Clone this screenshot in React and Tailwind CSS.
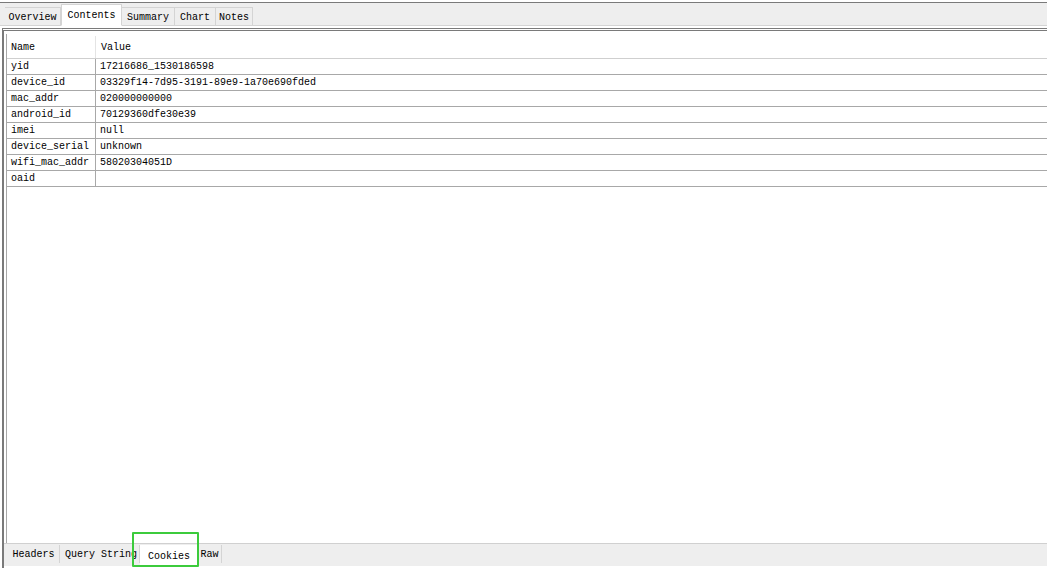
import React from "react";

const rows = [
  ["yid", "17216686_1530186598"],
  ["device_id", "03329f14-7d95-3191-89e9-1a70e690fded"],
  ["mac_addr", "020000000000"],
  ["android_id", "70129360dfe30e39"],
  ["imei", "null"],
  ["device_serial", "unknown"],
  ["wifi_mac_addr", "58020304051D"],
  ["oaid", ""],
];

const topTabs = [
  { label: "Overview", w: "w-[56px]" },
  { label: "Contents", w: "w-[61px]", active: true },
  { label: "Summary", w: "w-[53px]" },
  { label: "Chart", w: "w-[41px]" },
  { label: "Notes", w: "w-[37px]" },
];

export default function App() {
  return (
    <div
      className="w-[1047px] h-[568px] bg-white flex flex-col overflow-hidden text-[10px] text-black"
      style={{ fontFamily: '"Liberation Mono", "DejaVu Sans Mono", monospace' }}
    >
      {/* top tab strip */}
      <div className="h-[2px] bg-white" />
      <div className="h-[24px] border-t border-[#7a7a7a] border-b border-b-[#d4d4d4] bg-[#eeeeee] flex items-end pl-[5px]">
        {topTabs.map((t) =>
          t.active ? (
            <div
              key={t.label}
              className={`${t.w} h-[22px] -mb-px bg-white border border-[#d4d4d4] border-b-white flex items-start justify-center pt-[3px]`}
            >
              {t.label}
            </div>
          ) : (
            <div
              key={t.label}
              className={`${t.w} h-[18px] border-r border-t border-[#d4d4d4] flex items-center justify-center pt-[1px]`}
            >
              {t.label}
            </div>
          )
        )}
      </div>

      {/* content area */}
      <div className="flex-1 flex flex-col mt-[2px] ml-[2px] border-l-2 border-double border-l-[#7a7a7a] border-t-[3px] border-t-[#7a7a7a] border-t-double">
        <div className="flex-1 flex flex-col pt-[3px] pl-[2px]">
          <div className="border-l border-[#a8a8a8]">
            <div className="flex h-[25px] items-center border-b border-[#cfcfcf] pt-[2px]">
              <div className="w-[89px] h-full flex items-center pl-[4px] border-r border-[#e4e4e4]">Name</div>
              <div className="pl-[5px]">Value</div>
            </div>
            {rows.map(([k, v]) => (
              <div key={k} className="flex h-[16px] items-center border-b border-[#a8a8a8]">
                <div className="w-[89px] h-full flex items-center pl-[4px] border-r border-[#a8a8a8]">{k}</div>
                <div className="pl-[4px]">{v}</div>
              </div>
            ))}
          </div>
          <div className="flex-1 border-l border-[#a8a8a8]" />
        </div>

        {/* bottom tab strip */}
        <div className="relative h-[23px] border-t border-[#d0d0d0] bg-[#eeeeee] flex items-start pl-[4px]">
          <div className="w-[52px] h-[18px] mt-px border-r border-[#d4d4d4] flex items-center justify-center">Headers</div>
          <div className="w-[80px] h-[18px] mt-px border-r border-[#d4d4d4] flex items-center pl-[5px] overflow-hidden whitespace-nowrap">Query String</div>
          <div className="w-[58px] h-[21px] mt-[1px] bg-white flex items-center justify-center pt-[1px]">Cookies</div>
          <div className="w-[24px] h-[18px] mt-px border-r border-[#d4d4d4] flex items-center justify-center">Raw</div>
          <div className="absolute left-[128px] top-[-12px] w-[67px] h-[35px] border-2 border-[#3ccb3c] rounded-[1px]" />
        </div>
        <div className="h-[2px] bg-white" />
      </div>
    </div>
  );
}
